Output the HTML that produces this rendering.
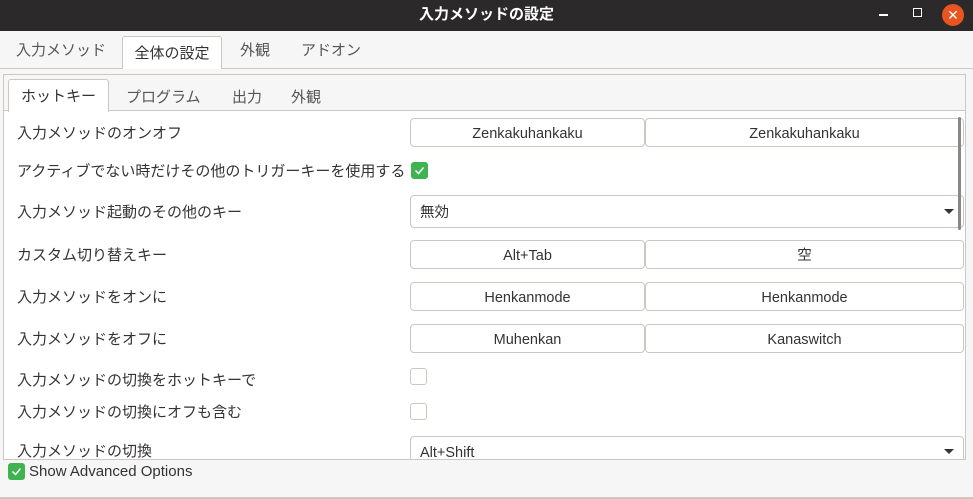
<!DOCTYPE html><html><head><meta charset="utf-8"><style>
*{box-sizing:border-box;margin:0;padding:0}
body{width:973px;height:499px;overflow:hidden;background:#f6f6f6;font-family:"Liberation Sans","Noto Sans CJK JP",sans-serif;font-size:14px;color:#3d3d3d;position:relative}
.a{position:absolute}
.title{left:0;top:0;width:973px;height:31px;background:#2b2929;color:#fff;font-weight:bold;font-size:15px;text-align:center;line-height:30px}
.tab{top:31px;height:37px;line-height:40px;font-size:15px;color:#555}
.btn{height:29px;border:1px solid #cdc7c2;border-radius:4px;background:#fff;display:flex;align-items:center;justify-content:center;font-size:14.5px;line-height:1;color:#333;padding-top:3px}
.dd{justify-content:flex-start;padding-left:9px}
.lbl{left:17px;font-size:15px;color:#333;line-height:18px}
.cb{width:17px;height:17px;border:1px solid #cdc7c2;border-radius:3px;background:#fff}
.ck{background:#3eb34f;border-color:#3eb34f}
.arr{position:absolute;right:9px;top:13px;border-left:5px solid transparent;border-right:5px solid transparent;border-top:5px solid #333}
</style></head><body>
<div class="a title">入力メソッドの設定</div>
<div class="a" style="left:879px;top:14px;width:9px;height:2px;background:#fff"></div>
<div class="a" style="left:913px;top:8px;width:9px;height:9px;border:1.5px solid #fff"></div>
<div class="a" style="left:942px;top:4px;width:22px;height:22px;border-radius:50%;background:#e95420;color:#fff;text-align:center;line-height:22px;font-size:14px">✕</div>
<div class="a" style="left:0;top:68px;width:973px;height:1px;background:#cdc7c2"></div>
<div class="a tab" style="left:16px">入力メソッド</div>
<div class="a" style="left:122px;top:36px;width:100px;height:33px;background:#fff;border:1px solid #cdc7c2;border-bottom:none;border-radius:3px 3px 0 0;text-align:center;line-height:33px;font-size:15px;color:#333">全体の設定</div>
<div class="a tab" style="left:240px">外観</div>
<div class="a tab" style="left:301px">アドオン</div>
<div class="a" style="left:3px;top:74px;width:963px;height:386px;border:1px solid #cdc7c2;background:#fff;border-bottom:none"></div>
<div class="a" style="left:4px;top:75px;width:961px;height:36px;background:#f6f6f6;border-bottom:1px solid #cdc7c2"></div>
<div class="a" style="left:8px;top:79px;width:101px;height:33px;background:#fff;border:1px solid #cdc7c2;border-bottom:none;border-radius:3px 3px 0 0;text-align:center;line-height:33px;font-size:15px;color:#333">ホットキー</div>
<div class="a" style="left:126px;top:86px;color:#555;font-size:15px">プログラム</div>
<div class="a" style="left:232px;top:86px;color:#555;font-size:15px">出力</div>
<div class="a" style="left:291px;top:86px;color:#555;font-size:15px">外観</div>
<div class="a" style="left:958px;top:117px;width:3px;height:113px;background:#888;border-radius:2px;z-index:2"></div>
<div class="a lbl" style="top:125px">入力メソッドのオンオフ</div>
<div class="a btn" style="left:410px;top:118px;width:235px">Zenkakuhankaku</div>
<div class="a btn" style="left:645px;top:118px;width:319px">Zenkakuhankaku</div>
<div class="a lbl" style="top:163px">アクティブでない時だけその他のトリガーキーを使用する</div>
<div class="a cb ck" style="left:411px;top:162px"><svg width="15" height="15" viewBox="0 0 15 15"><path d="M3.5 7.5l3 3 5-6" stroke="#fff" stroke-width="1.5" fill="none"/></svg></div>
<div class="a lbl" style="top:204px">入力メソッド起動のその他のキー</div>
<div class="a btn dd" style="left:410px;top:195px;width:554px;height:33px">無効<span class="arr"></span></div>
<div class="a lbl" style="top:247px">カスタム切り替えキー</div>
<div class="a btn" style="left:410px;top:240px;width:235px">Alt+Tab</div>
<div class="a btn" style="left:645px;top:240px;width:319px">空</div>
<div class="a lbl" style="top:289px">入力メソッドをオンに</div>
<div class="a btn" style="left:410px;top:282px;width:235px">Henkanmode</div>
<div class="a btn" style="left:645px;top:282px;width:319px">Henkanmode</div>
<div class="a lbl" style="top:331px">入力メソッドをオフに</div>
<div class="a btn" style="left:410px;top:324px;width:235px">Muhenkan</div>
<div class="a btn" style="left:645px;top:324px;width:319px">Kanaswitch</div>
<div class="a lbl" style="top:372px">入力メソッドの切換をホットキーで</div>
<div class="a cb" style="left:410px;top:368px"></div>
<div class="a lbl" style="top:404px">入力メソッドの切換にオフも含む</div>
<div class="a cb" style="left:410px;top:403px"></div>
<div class="a" style="left:4px;top:434px;width:961px;height:25px;overflow:hidden">
<div class="a lbl" style="left:13px;top:9px">入力メソッドの切換</div>
<div class="a btn dd" style="left:406px;top:2px;width:554px;height:33px;align-items:flex-start;padding-top:9px">Alt+Shift<span class="arr" style="top:12px"></span></div>
</div>
<div class="a" style="left:3px;top:459px;width:963px;height:1px;background:#cdc7c2"></div>
<div class="a cb ck" style="left:8px;top:463px"><svg width="15" height="15" viewBox="0 0 15 15"><path d="M3.5 7.5l3 3 5-6" stroke="#fff" stroke-width="1.5" fill="none"/></svg></div>
<div class="a lbl" style="left:29px;top:463px">Show Advanced Options</div>
<div class="a" style="left:0;top:497px;width:973px;height:2px;background:#cdc7c2"></div>
</body></html>
